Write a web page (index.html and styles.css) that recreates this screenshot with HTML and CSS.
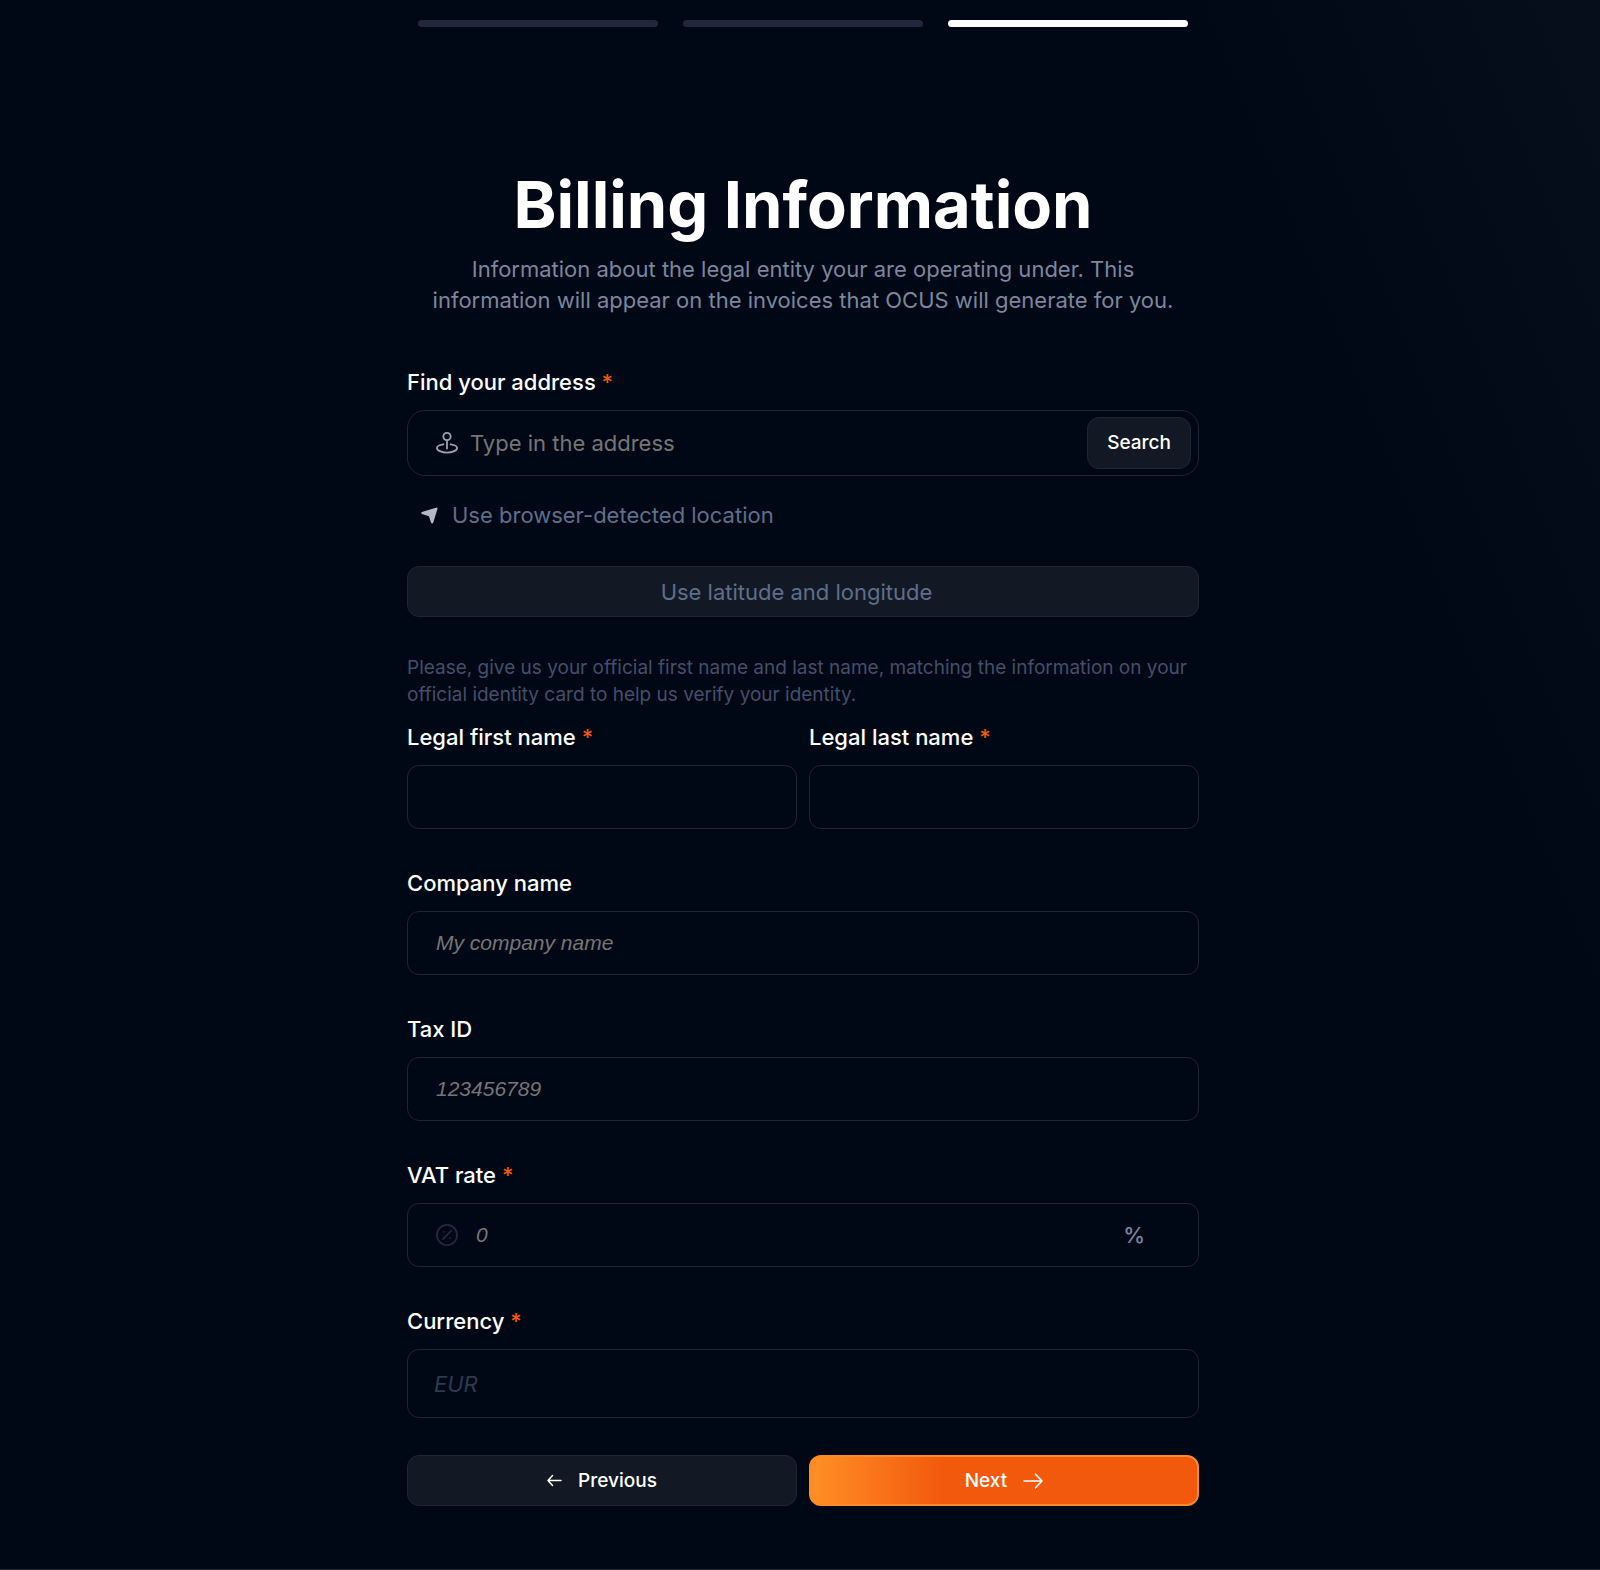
FILE: index.html
```
<!doctype html>
<html lang="en">
	<head>
		<meta charset="utf-8" />
		<meta name="viewport" content="width=device-width, initial-scale=1" />
		<title>Billing Information</title>
		<link rel="stylesheet" href="styles.css">
	</head>

	<body>
		<main class="page">
			<div class="steps">
				<span class="step"></span>
				<span class="step"></span>
				<span class="step active"></span>
			</div>

			<header class="intro">
				<h1>Billing Information</h1>
				<p>
					Information about the legal entity your are operating under. This
					information will appear on the invoices that OCUS will generate for
					you.
				</p>
			</header>

			<form class="billing-form">
				<div class="field">
					<label for="address">Find your address <span class="required">*</span></label>
					<div class="control search-control">
						<svg class="icon" viewBox="0 0 24 24" fill="none" stroke="currentColor" stroke-width="2" stroke-linecap="round">
							<circle cx="12" cy="5" r="4" />
							<path d="M12 9v9" />
							<path d="M8 13.4c-4 .6-7 2.1-7 4C1 20 6 22.500 12 22.500s11-2.500 11-5.100c0-1.900-3-3.400-7-4" />
						</svg>
						<input type="text" id="address" placeholder="Type in the address" />
						<button type="button" class="btn search-btn">Search</button>
					</div>
				</div>

				<button type="button" class="detect-btn">
					<svg class="arrow-icon" viewBox="0 0 18 18" fill="currentColor">
						<path d="M1 5.200 16 .7c1-.3 1.700.3 1.400 1.300l-4.500 14.800c-.4 1-1.800 1-2.200 0L8.600 10.400c-.2-.5-.5-.8-1-1L1 7.300c-1-.4-1-1.700 0-2.100z" />
					</svg>
					Use browser-detected location
				</button>

				<button type="button" class="btn coords-btn">Use latitude and longitude</button>

				<p class="note">
					Please, give us your official first name and last name, matching the
					information on your official identity card to help us verify your
					identity.
				</p>

				<div class="row names">
					<div class="field">
						<label for="firstName">Legal first name <span class="required">*</span></label>
						<div class="control">
							<input type="text" id="firstName" />
						</div>
					</div>
					<div class="field">
						<label for="lastName">Legal last name <span class="required">*</span></label>
						<div class="control">
							<input type="text" id="lastName" />
						</div>
					</div>
				</div>

				<div class="field">
					<label for="company">Company name</label>
					<div class="control">
						<input type="text" id="company" placeholder="My company name" />
					</div>
				</div>

				<div class="field">
					<label for="taxId">Tax ID</label>
					<div class="control">
						<input type="text" id="taxId" placeholder="123456789" />
					</div>
				</div>

				<div class="field">
					<label for="vat">VAT rate <span class="required">*</span></label>
					<div class="control vat-control">
						<svg class="icon" viewBox="0 0 24 24" fill="none" stroke="currentColor" stroke-width="2" stroke-linecap="round">
							<circle cx="12" cy="12" r="11" />
							<path d="M7.500 16.500l9-9" />
							<path d="M8.500 8.500h.01M15.500 15.500h.01" />
						</svg>
						<input type="text" id="vat" placeholder="0" />
						<span class="suffix">%</span>
					</div>
				</div>

				<div class="field">
					<label for="currency">Currency <span class="required">*</span></label>
					<select id="currency" class="control currency">
						<option>EUR</option>
					</select>
				</div>

				<div class="row actions">
					<button type="button" class="btn">
						<svg class="prev-icon" viewBox="0 0 15 13" fill="none" stroke="currentColor" stroke-width="1.5" stroke-linecap="round" stroke-linejoin="round">
							<path d="M14 6.500H1M5.500 1.500 1 6.500l4.500 5" />
						</svg>
						Previous
					</button>
					<button type="submit" class="btn primary">
						Next
						<svg class="next-icon" viewBox="0 0 20 16" fill="none" stroke="currentColor" stroke-width="1.6" stroke-linecap="round" stroke-linejoin="round">
							<path d="M1 8h18M12.500 1.200 19 8l-6.500 6.800" />
						</svg>
					</button>
				</div>
			</form>
		</main>
	</body>
</html>
```

FILE: styles.css
```
:root {
	--bg: #000815;
	--panel: #121924;
	--line: #1d2635;
	--white: #ffffff;
	--slate-300: #7a879d;
	--slate-400: #5f6e8a;
	--slate-500: #434f69;
	--slate-600: #2d3a54;
	--placeholder: #757575;
	--accent: #f2590d;
}

* {
	box-sizing: border-box;
}

body {
	margin: 0;
	min-height: 100vh;
	font-family: "Inter", sans-serif;
	font-size: 22px;
	line-height: 28px;
	color: var(--white);
	background: linear-gradient(248deg, #070e1b 0%, var(--bg) 20%);
	border-bottom: 1px solid var(--line);
}

.page {
	max-width: 798px;
	margin: 0 auto;
	padding: 20px 0 62px 6px;
}

/* step progress */
.steps {
	display: flex;
	gap: 25px;
	margin: 0 11px;
}

.step {
	flex: 1;
	height: 7px;
	border-radius: 4px;
	background-color: #1f293b;
}

.step.active {
	background-color: var(--white);
}

.intro {
	margin: 138px 0 52px;
	text-align: center;
}

h1 {
	margin: 0 0 9px;
	font-size: 65px;
	font-weight: 700;
	line-height: 80px;
}

.intro p {
	margin: 0;
	padding: 0 12px;
	line-height: 31px;
	color: var(--slate-300);
}

/* fields */
.field {
	margin-bottom: 40px;
}

label {
	display: block;
	margin-bottom: 14px;
	font-weight: 500;
}

.required {
	color: var(--accent);
}

.control {
	display: flex;
	align-items: center;
	width: 100%;
	height: 64px;
	padding: 0 28px;
	border: 1px solid var(--line);
	border-radius: 12px;
}

.control:focus-within {
	border-color: var(--slate-500);
}

input,
select,
button {
	font: inherit;
	color: inherit;
}

input {
	flex: 1;
	min-width: 0;
	padding: 0;
	border: none;
	outline: none;
	background: none;
	font-family: "Liberation Sans", Arial, sans-serif;
	font-size: 21px;
}

input::placeholder {
	color: var(--placeholder);
	font-style: italic;
	opacity: 1;
}

.icon {
	flex: none;
	width: 22px;
	height: 22px;
}

.search-control {
	height: 66px;
	gap: 12px;
	padding-right: 7px;
	border-radius: 18px;
}

.search-control .icon {
	color: #99a0ae;
}

.search-control input {
	font-family: inherit;
	font-size: 22px;
}

.search-control input::placeholder {
	font-style: normal;
}

.vat-control {
	gap: 18px;
	padding-right: 53px;
}

.vat-control .icon {
	color: #1f2a3e;
}

.suffix {
	font-weight: 500;
	color: var(--slate-300);
}

.currency {
	display: block;
	height: 69px;
	padding: 0 26px;
	appearance: none;
	background: none;
	color: var(--slate-600);
	font-style: italic;
}

/* buttons */
.btn {
	display: flex;
	align-items: center;
	justify-content: center;
	gap: 16px;
	height: 51px;
	padding: 0 19px;
	border: 1px solid var(--line);
	border-radius: 12px;
	background-color: var(--panel);
	font-size: 19px;
	font-weight: 500;
	cursor: pointer;
}

.btn.primary {
	border: 2px solid #fb8a28;
	background: linear-gradient(90deg, #ff8c24 2%, var(--accent) 34%);
}

.search-btn {
	height: 52px;
}

.detect-btn {
	display: flex;
	align-items: center;
	gap: 14px;
	margin: -15px 0 37px;
	padding: 0 14px;
	border: none;
	background: none;
	color: var(--slate-400);
	cursor: pointer;
}

.arrow-icon {
	width: 17px;
	height: 17px;
	color: #b4bac5;
}

.coords-btn {
	width: 100%;
	padding-right: 32px;
	font-size: 22px;
	font-weight: 400;
	color: var(--slate-400);
}

.note {
	margin: 37px 0 15px;
	font-size: 19px;
	line-height: 27px;
	color: var(--slate-500);
}

.row {
	display: grid;
	grid-template-columns: 1fr 1fr;
	gap: 12px;
}

.actions {
	margin-top: -3px;
}

.prev-icon {
	width: 15px;
	height: 13px;
}

.next-icon {
	width: 20px;
	height: 16px;
}
```
